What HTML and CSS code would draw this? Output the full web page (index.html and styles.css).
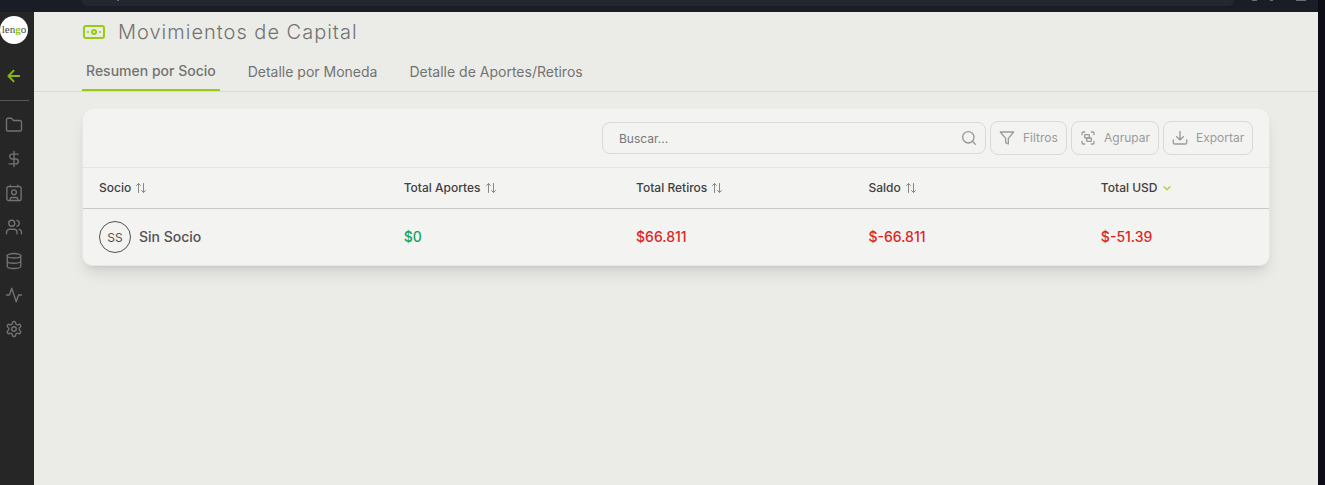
FILE: index.html
```html
<!DOCTYPE html>
<html lang="es">
<head>
<meta charset="utf-8">
<title>Movimientos de Capital</title>
<link rel="stylesheet" href="styles.css">
</head>
<body>
<svg class="defs" width="0" height="0">
  <symbol id="sort" viewBox="0 0 12 12"><path d="M1.500 3.500 3.500 1.500l2 2M3.500 1.500v9M6.500 8.500l2 2 2-2M8.500 1.500v9"/></symbol>
</svg>
<div class="browser-bar"><div class="address"><i class="mark"></i></div><div class="marks"><i></i><i class="dot"></i><i class="wide"></i></div></div>
<div class="shell">
  <nav class="sidebar">
    <div class="logo"><span>len<b>g</b>o</span></div>
    <svg class="back" viewBox="0 0 24 24"><path d="M19 12H4.500M11.500 5l-7 7 7 7"/></svg>
    <div class="rule"></div>
    <div class="menu">
      <svg viewBox="0 0 24 24"><path d="M4 20h16a2 2 0 0 0 2-2V8a2 2 0 0 0-2-2h-7.900a2 2 0 0 1-1.700-.9L9.600 3.900A2 2 0 0 0 7.900 3H4a2 2 0 0 0-2 2v13a2 2 0 0 0 2 2Z"/></svg>
      <svg viewBox="0 0 24 24"><path d="M12 2v20M17.500 5.500H9.500a3.250 3.250 0 0 0 0 6.500h5a3.250 3.250 0 0 1 0 6.500H5.500"/></svg>
      <svg viewBox="0 0 24 24"><rect x="2.500" y="3.500" width="19" height="18.500" rx="2"/><path d="M7 1.500v2M17 1.500v2M7 22v-2a2 2 0 0 1 2-2h6a2 2 0 0 1 2 2v2"/><circle cx="12" cy="11" r="3.200"/></svg>
      <svg viewBox="0 0 24 24"><path d="M16 21v-2a4 4 0 0 0-4-4H6a4 4 0 0 0-4 4v2M22 21v-2a4 4 0 0 0-3-3.870M16 3.130a4 4 0 0 1 0 7.750"/><circle cx="9" cy="7" r="4"/></svg>
      <svg viewBox="0 0 24 24"><ellipse cx="12" cy="5" rx="9" ry="3"/><path d="M3 5v14c0 1.660 4 3 9 3s9-1.340 9-3V5M3 12c0 1.660 4 3 9 3s9-1.340 9-3"/></svg>
      <svg viewBox="0 0 24 24"><path d="M22 12h-4l-3 9L9 3l-3 9H2"/></svg>
      <svg viewBox="0 0 24 24"><path d="M12.220 2h-.44a2 2 0 0 0-2 2v.18a2 2 0 0 1-1 1.730l-.43.25a2 2 0 0 1-2 0l-.15-.08a2 2 0 0 0-2.730.73l-.22.38a2 2 0 0 0 .73 2.730l.15.1a2 2 0 0 1 1 1.720v.51a2 2 0 0 1-1 1.740l-.15.09a2 2 0 0 0-.73 2.730l.22.38a2 2 0 0 0 2.730.73l.15-.08a2 2 0 0 1 2 0l.43.25a2 2 0 0 1 1 1.730V20a2 2 0 0 0 2 2h.44a2 2 0 0 0 2-2v-.18a2 2 0 0 1 1-1.730l.43-.25a2 2 0 0 1 2 0l.15.08a2 2 0 0 0 2.730-.73l.22-.39a2 2 0 0 0-.73-2.730l-.15-.08a2 2 0 0 1-1-1.740v-.5a2 2 0 0 1 1-1.740l.15-.09a2 2 0 0 0 .73-2.730l-.22-.38a2 2 0 0 0-2.730-.73l-.15.08a2 2 0 0 1-2 0l-.43-.25a2 2 0 0 1-1-1.730V4a2 2 0 0 0-2-2z"/><circle cx="12" cy="12" r="3"/></svg>
    </div>
  </nav>
  <main class="page">
    <header class="title">
      <svg class="cash" viewBox="0 0 24 24"><rect x="2" y="6" width="20" height="12" rx="2"/><circle cx="12" cy="12" r="2"/><path d="M6 12h.01M18 12h.01"/></svg>
      <h1>Movimientos de Capital</h1>
    </header>
    <div class="tabs">
      <a class="tab active">Resumen por Socio</a>
      <a class="tab">Detalle por Moneda</a>
      <a class="tab">Detalle de Aportes/Retiros</a>
    </div>
    <section class="card">
      <div class="toolbar">
        <div class="search"><span>Buscar...</span><svg viewBox="0 0 24 24"><circle cx="11" cy="11" r="8.500"/><path d="m21.500 21.500-4.500-4.500"/></svg></div>
        <button class="btn filter"><svg viewBox="0 0 24 24"><path d="M22 3H2l8 9.460V19l4 2v-8.540L22 3z"/></svg>Filtros</button>
        <button class="btn group"><svg viewBox="0 0 24 24"><path d="M3 7V5a2 2 0 0 1 2-2h2M17 3h2a2 2 0 0 1 2 2v2M21 17v2a2 2 0 0 1-2 2h-2M7 21H5a2 2 0 0 1-2-2v-2"/><rect x="7" y="7" width="7" height="5" rx="1"/><rect x="10" y="12" width="7" height="5" rx="1"/></svg>Agrupar</button>
        <button class="btn export"><svg viewBox="0 0 24 24"><path d="M2 15v4a2 2 0 0 0 2 2h16a2 2 0 0 0 2-2v-4M7 10l5 5 5-5M12 15V2"/></svg>Exportar</button>
      </div>
      <div class="row head">
        <div>Socio<svg><use href="#sort"/></svg></div>
        <div>Total Aportes<svg><use href="#sort"/></svg></div>
        <div>Total Retiros<svg><use href="#sort"/></svg></div>
        <div>Saldo<svg><use href="#sort"/></svg></div>
        <div>Total USD<svg class="down" viewBox="0 0 12 12"><path d="m3 4.700 3 3 3-3"/></svg></div>
      </div>
      <div class="row data">
        <div><span class="avatar">SS</span><span class="name">Sin Socio</span></div>
        <div class="pos">$0</div>
        <div class="neg">$66.811</div>
        <div class="neg">$-66.811</div>
        <div class="neg">$-51.39</div>
      </div>
    </section>
  </main>
</div>
</body>
</html>
```

FILE: styles.css
```css
* { box-sizing: border-box; }
body {
  margin: 0;
  height: 485px;
  overflow: hidden;
  background: #0e0d15;
  font-family: Inter, "Liberation Sans", sans-serif;
  display: flex;
  flex-direction: column;
}
svg { fill: none; stroke: currentColor; stroke-linecap: round; stroke-linejoin: round; stroke-width: 2; flex: none; }
.defs { display: none; }
.browser-bar {
  height: 12px;
  width: 1318px;
  padding-left: 82px;
  background: #1a1d26;
  display: flex;
  align-items: flex-start;
}
.address { width: 1152px; height: 6px; padding-left: 35px; background: #24272f; border-radius: 0 0 5px 5px; }
.mark { display: block; width: 2px; height: 1px; background: #4a7890; }
.marks { display: flex; padding-left: 18px; }
.marks i { width: 5px; height: 1px; margin-right: 13px; background: #6b6e74; }
.marks .dot { width: 3px; margin-right: 23px; }
.marks .wide { width: 10px; margin: 0; }
.shell { display: flex; flex: 1; width: 1318px; }
.sidebar { width: 34px; background: #262626; color: #737373; }
.logo {
  width: 28px; height: 28px; margin-top: 4px; padding-bottom: 3px;
  display: flex; align-items: center; justify-content: center;
  overflow: hidden; border-radius: 50%; background: #fff;
  font: 11px/20px "Liberation Serif", serif; color: #444;
}
.logo b { font-weight: 700; color: #94c618; }
.back { display: block; width: 18px; height: 18px; margin: 23px 0 0 5px; color: #84b80b; stroke-width: 2.4; }
.rule { width: 29px; height: 1px; margin-top: 15px; background: #585858; }
.menu { display: flex; flex-direction: column; gap: 16px; padding: 15px 0 0 5px; }
.menu svg { width: 18px; height: 18px; stroke-width: 1.8; }
.page { flex: 1; background: #ebece7; }
.title { display: flex; align-items: center; height: 40px; padding-left: 48px; gap: 12px; color: #99cc0c; }
.cash { width: 24px; height: 24px; stroke-width: 2; }
h1 { margin: 0; font-size: 20px; line-height: 28px; font-weight: 300; letter-spacing: 1px; color: #737373; }
.tabs { display: flex; gap: 24px; height: 40px; padding-left: 48px; border-bottom: 1px solid #d8d9d7; color: #737373; }
.tab { height: 39px; padding: 10px 4px 0; font-size: 14px; line-height: 20px; }
.tab.active { padding-top: 9px; border-bottom: 2px solid #99cc0c; font-weight: 500; }
.card {
  width: 1188px; height: 157px; margin: 17px 0 0 48px;
  background: #f3f3f1; border: 1px solid #e6e7e4; border-top: 0; border-radius: 10px;
  box-shadow: 0 10px 15px -3px rgba(0,0,0,.1), 0 4px 6px -4px rgba(0,0,0,.1);
}
.toolbar { display: flex; justify-content: flex-end; align-items: center; gap: 4px; height: 59px; padding: 0 16px 0 0; border-bottom: 1px solid #e4e4e2; }
.search, .btn { display: flex; align-items: center; border: 1px solid #d9d9d7; border-radius: 8px; background: transparent; color: #9b9b99; }
.search { width: 384px; height: 32px; justify-content: space-between; padding: 0 8px 0 16px; font-size: 12px; color: #777; }
.search span { padding-top: 1px; }
.search svg { width: 16px; height: 16px; color: #999; stroke-width: 2; }
.btn { height: 34px; gap: 8px; padding: 0 8px; font: 12px/18px Inter, sans-serif; }
.btn svg { width: 16px; height: 16px; stroke-width: 2; }
.filter { width: 77px; }
.group { width: 88px; }
.export { width: 90px; }
.row { display: grid; grid-template-columns: 304.700px repeat(4, 232.400px); padding-left: 16px; width: 1186px; overflow: hidden; }
.row > div { display: flex; align-items: center; }
.head { height: 41px; padding-bottom: 1px; border-bottom: 1px solid #c9cac8; font-size: 12px; font-weight: 500; color: #404040; }
.head svg { width: 12px; height: 12px; margin-left: 4px; color: #888; stroke-width: 1; }
.head .down { color: #a3d52b; stroke-width: 1.3; }
.data { height: 56px; font-size: 14px; font-weight: 500; color: #525252; }
.name, .pos, .neg { padding-bottom: 2px; }
.avatar { display: flex; align-items: center; justify-content: center; width: 32px; height: 32px; margin-right: 8px; border: 1px solid #525252; border-radius: 50%; font-size: 12px; font-weight: 400; }
.pos { color: #16a35a; }
.neg { color: #dc2626; }
```
